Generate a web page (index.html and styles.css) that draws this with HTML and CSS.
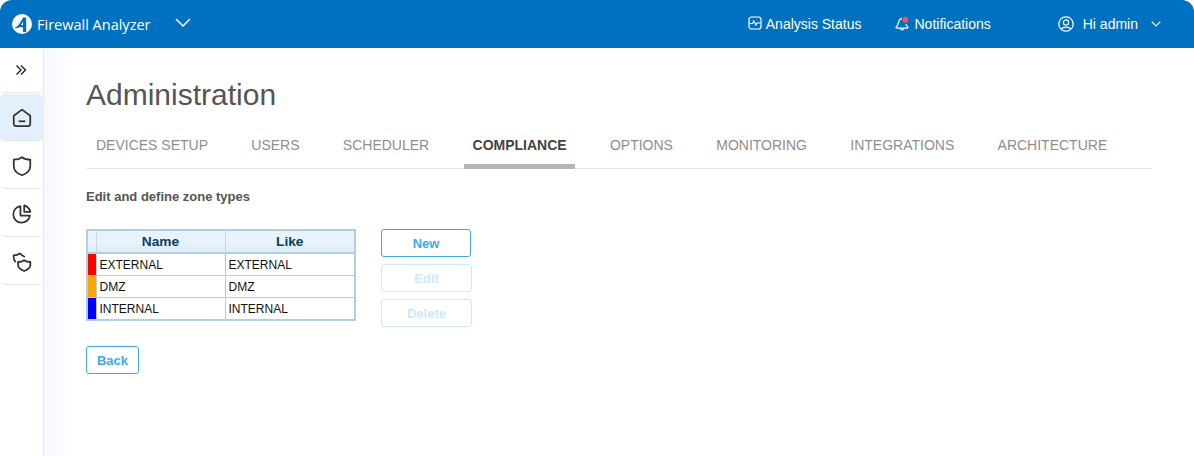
FILE: index.html
```html
<!DOCTYPE html>
<html lang="en">
<head>
<meta charset="utf-8">
<title>Firewall Analyzer</title>
<link rel="stylesheet" href="styles.css">
</head>
<body>
<div class="app">
  <header class="topbar">
    <div class="brand">
      <svg class="logo" viewBox="0 0 20 20" width="20" height="20"><circle cx="10" cy="10" r="10" fill="#fff"/><path d="M2 14.2 C5.6 13.4 9 8 11 3.6 H14.2 V18 H11 V13.2 H7.6 C6 14.2 4.2 14.6 2 14.2 Z" fill="#0070c0"/><path d="M8.8 11 C9.6 10 10.3 9 11 7.8 V11 Z" fill="#fff"/></svg>
      <span class="brand-name">Firewall Analyzer</span>
      <svg class="brand-caret" viewBox="0 0 16 9" width="16" height="9"><path d="M1 1 L8 8 L15 1" fill="none" stroke="#fff" stroke-width="1.5"/></svg>
    </div>
    <div class="top-actions">
      <div class="top-item status">
        <svg viewBox="0 0 14 14" width="14" height="14"><rect x="1" y="1" width="12" height="12" rx="2.5" fill="none" stroke="#fff" stroke-width="1.2"/><path d="M1.5 7.5 H4.5 L5.8 5 L7.8 9 L9 7 H12.5" fill="none" stroke="#fff" stroke-width="1.1"/></svg>
        <span>Analysis Status</span>
      </div>
      <div class="top-item notif">
        <svg viewBox="0 0 15 15" width="15" height="15"><path d="M7 2.4 C4.6 2.8 3.8 4.8 3.4 6.8 C3 8.8 2.2 10 1 11.2 C1 12 1.6 12.2 2.4 12.2 H11.6 C12.6 12.2 13.2 11.6 12.8 11 C11.8 10.2 11.2 9.4 11 8.2" fill="none" stroke="#fff" stroke-width="1.2" stroke-linejoin="round"/><path d="M5.2 12.6 C5.8 14.4 8.2 14.4 8.8 12.6" fill="none" stroke="#fff" stroke-width="1.2"/><circle cx="10.4" cy="3.8" r="3" fill="#f0525c"/></svg>
        <span>Notifications</span>
      </div>
      <div class="top-user">
        <svg viewBox="0 0 16 16" width="16" height="16"><circle cx="8" cy="8" r="7.2" fill="none" stroke="#fff" stroke-width="1.2"/><circle cx="8" cy="6.4" r="2.6" fill="none" stroke="#fff" stroke-width="1.2"/><path d="M3.4 13.2 C4.4 10.4 11.6 10.4 12.6 13.2" fill="none" stroke="#fff" stroke-width="1.2"/></svg>
        <span class="user-name">Hi admin</span>
        <svg class="user-caret" viewBox="0 0 10 6" width="10" height="6"><path d="M.7 .7 L5 5 L9.3 .7" fill="none" stroke="#fff" stroke-width="1.2"/></svg>
      </div>
    </div>
  </header>
  <div class="body-row">
    <nav class="sidebar">
      <div class="side-item side-toggle"><svg viewBox="0 0 12 12" width="12" height="12"><path d="M1.5 1.5 L6 6 L1.5 10.5 M6 1.5 L10.5 6 L6 10.5" fill="none" stroke="#222" stroke-width="1.4"/></svg></div>
      <div class="side-item active"><svg class="side-icon" viewBox="0 0 20 20"><path d="M2.5 8 L10 2.4 L17.5 8 V15.3 A2 2 0 0 1 15.5 17.3 H4.5 A2 2 0 0 1 2.5 15.3 Z" fill="none" stroke="#333" stroke-width="1.6" stroke-linejoin="round"/><path d="M7 13 H13" stroke="#333" stroke-width="1.6"/></svg></div>
      <div class="side-item"><svg class="side-icon" viewBox="0 0 20 20"><path d="M10 2 C12 3.6 14.6 4.2 17.5 4.2 V10 C17.5 14 14 17 10 18.4 C6 17 2.5 14 2.5 10 V4.2 C5.4 4.2 8 3.6 10 2 Z" fill="none" stroke="#333" stroke-width="1.6" stroke-linejoin="round"/></svg></div>
      <div class="side-item"><svg class="side-icon" viewBox="0 0 20 20"><path d="M8.6 2.8 A7.6 7.6 0 1 0 17.2 11.4 H8.6 Z" fill="none" stroke="#333" stroke-width="1.6" stroke-linejoin="round"/><path d="M12 2.2 C15 3.2 16.8 5 17.6 8 H12 Z" fill="none" stroke="#333" stroke-width="1.6" stroke-linejoin="round"/></svg></div>
      <div class="side-item"><svg class="side-icon" viewBox="0 0 20 20"><path d="M12 8.4 C13.6 9.6 15.4 10 17.6 10 V12.6 C17.6 15.4 15 17.2 12 18.2 C9 17.2 6.4 15.4 6.4 12.6 V10 C8.6 10 10.4 9.6 12 8.4 Z" fill="none" stroke="#333" stroke-width="1.6" stroke-linejoin="round"/><path d="M12.6 5.4 C10.8 4.6 9.6 3.6 8 2.2 C6.6 3.4 4.6 4 2.4 4 C2.2 6.4 2.8 8.6 4.2 10.2" fill="none" stroke="#333" stroke-width="1.6" stroke-linejoin="round"/></svg></div>
    </nav>
    <main class="content">
      <h1 class="title">Administration</h1>
      <div class="tabs">
        <span class="tab">DEVICES SETUP</span>
        <span class="tab">USERS</span>
        <span class="tab">SCHEDULER</span>
        <span class="tab current">COMPLIANCE</span>
        <span class="tab">OPTIONS</span>
        <span class="tab">MONITORING</span>
        <span class="tab">INTEGRATIONS</span>
        <span class="tab">ARCHITECTURE</span>
      </div>
      <p class="lead">Edit and define zone types</p>
      <div class="zone-row">
        <table class="grid">
          <thead>
            <tr><th class="swatch-col"></th><th class="name-col">Name</th><th>Like</th></tr>
          </thead>
          <tbody>
            <tr><td class="swatch-col"><div class="swatch red"></div></td><td>EXTERNAL</td><td>EXTERNAL</td></tr>
            <tr><td class="swatch-col"><div class="swatch orange"></div></td><td>DMZ</td><td>DMZ</td></tr>
            <tr><td class="swatch-col"><div class="swatch blue"></div></td><td>INTERNAL</td><td>INTERNAL</td></tr>
          </tbody>
        </table>
        <div class="btn-col">
          <button class="btn btn-wide">New</button>
          <button class="btn btn-wide disabled">Edit</button>
          <button class="btn btn-wide disabled">Delete</button>
        </div>
      </div>
      <button class="btn btn-back">Back</button>
    </main>
  </div>
</div>
</body>
</html>
```
FILE: styles.css
```css
* { box-sizing: border-box; }
html, body { margin: 0; height: 100%; background: #fff; }
body { font-family: "Liberation Sans", Arial, sans-serif; overflow: hidden; }
.app { width: 1194px; height: 456px; display: flex; flex-direction: column; background: #fff; }

.topbar {
  height: 48px; flex: none; background: #0070c0; color: #fff;
  display: flex; justify-content: space-between; align-items: center;
  border-radius: 12px 12px 0 0;
  padding: 0 33px 0 12px;
}
.brand { display: flex; align-items: center; }
.logo { display: block; }
.brand-name { font-family: "Open Sans", sans-serif; font-size: 14.5px; margin-left: 5px; }
.brand-caret { margin-left: 24px; margin-bottom: 3px; }
.top-actions { display: flex; align-items: center; height: 40px; }
.top-item { display: flex; align-items: center; gap: 4px; font-size: 14px; }
.top-item svg { margin-bottom: 2px; }
.status { margin-right: 34px; }
.notif { margin-right: 40px; }
.top-user { display: flex; align-items: center; height: 32px; border-left: 1px solid #1a68ad; padding-left: 26px; font-size: 14px; }
.user-name { margin-left: 9px; }
.user-caret { margin-left: 13px; }

.body-row { flex: 1; display: flex; min-height: 0; }
.sidebar { width: 44px; flex: none; border-right: 1px solid #e9ebf2; background: #fff; border-radius: 0 0 0 8px; }
.side-item { height: 48px; padding-top: 2px; display: flex; align-items: center; justify-content: center; border-bottom: 1px solid #e6e6e6; border-radius: 0 0 5px 5px; }
.side-icon { width: 22px; height: 22px; display: block; }
.side-toggle { height: 45px; padding: 0 2px 0 0; }
.side-item.active { height: 47px; margin-top: 1px; padding-top: 1px; background: #e3f0fb; border-radius: 5px; border-bottom-color: #dce6ef; }

.content {
  flex: 1; padding: 0 42px;
  background: linear-gradient(90deg, #f7f8fe 0, #fff 32px);
}
.title { margin: 29px 0 0; font-size: 30px; line-height: 35px; font-weight: 400; color: #555; }
.tabs { display: flex; gap: 26.3px; margin-top: 15px; height: 42px; border-bottom: 1px solid #e5e5e5; padding-left: 1.5px; }
.tab { height: 42px; padding: 10px 8.5px 0; font-size: 14px; line-height: 16px; color: #8e8e8e; border-bottom: 5px solid transparent; }
.tab.current { color: #444; font-weight: 700; border-bottom-color: #b5b5b5; }
.lead { margin: 20px 0 0; font-size: 13px; line-height: 15px; font-weight: 700; color: #555; }

.zone-row { display: flex; align-items: flex-start; margin-top: 25px; gap: 25px; }
.grid { width: 270px; table-layout: fixed; border-collapse: collapse; border: 2px solid #b5cde0; font-size: 12px; color: #111; }
.grid th { height: 23px; padding: 0; font-size: 13.7px; font-weight: 700; color: #0c3c60; background: linear-gradient(#e8f3fd 0, #e8f3fd 55%, #dcecfa 100%); border: 1px solid #c4d8e9; border-bottom: 2px solid #b5cde0; }
.grid td { height: 22px; padding: 0 3px; border: 1px solid #b5cde0; }
.swatch-col { width: 9px; }
.grid td.swatch-col { padding: 0; border-left: 0; }
.name-col { width: 129px; }
.swatch { width: 8px; height: 21px; }
.red { background: #f00; }
.orange { background: #ffa500; }
.blue { background: #00f; }

.btn-col { display: flex; flex-direction: column; gap: 7px; }
.btn {
  display: block; height: 28px; padding: 0; background: #fff; border: 1px solid #3fa9e0; border-radius: 3px;
  font-family: "Liberation Sans", Arial, sans-serif; font-size: 13px; font-weight: 700; color: #3fa9e0;
}
.btn-wide { width: 90px; }
.btn.disabled { width: 91px; border-color: #cde8f7; color: #cde8f7; }
.btn-back { width: 53px; margin-top: 19px; }
```
